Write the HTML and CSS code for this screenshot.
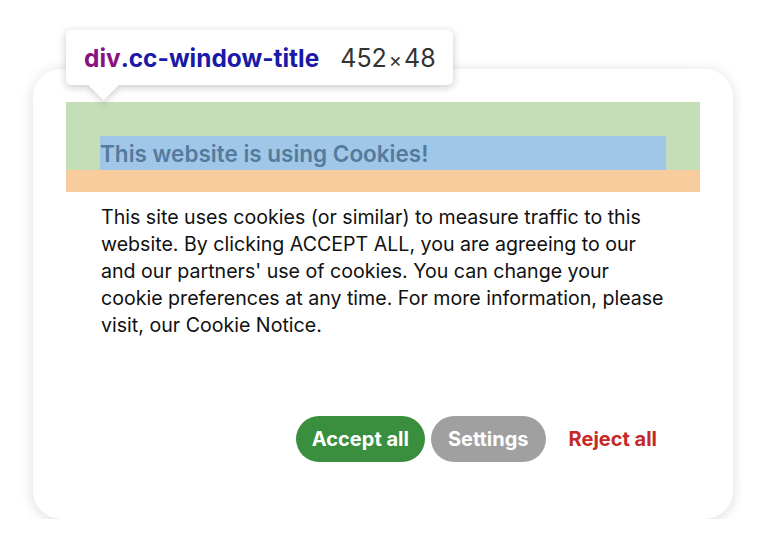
FILE: index.html
```html
<!DOCTYPE html>
<html>
<head>
<meta charset="utf-8">
<link rel="stylesheet" href="styles.css">
</head>
<body>
<div class="stage">
  <div class="cc-window">
    <div class="cc-window-title"><span class="title-text">This website is using Cookies!</span></div>
    <p class="cc-message">This site uses cookies (or similar) to measure traffic to this website. By clicking ACCEPT ALL, you are agreeing to our and our partners' use of cookies. You can change your cookie preferences at any time. For more information, please visit, our Cookie Notice.</p>
    <div class="cc-buttons">
      <button class="cc-btn cc-accept">Accept all</button>
      <button class="cc-btn cc-settings">Settings</button>
      <button class="cc-btn cc-reject">Reject all</button>
    </div>
  </div>
  <div class="inspect-tip">
    <span class="tag">div</span><span class="cls">.cc-window-title</span>
    <span class="dims">452<span class="times">×</span>48</span>
  </div>
</div>
</body>
</html>
```

FILE: styles.css
```css
html, body {
  margin: 0;
  padding: 0;
  background: #ffffff;
  font-family: Inter, "Noto Sans", sans-serif;
}

.stage {
  position: relative;
  padding: 69px 43px 0 33px;
}

.cc-window {
  width: 700px;
  height: 450px;
  box-sizing: border-box;
  padding: 33px;
  background: #fff;
  border-radius: 28px;
  box-shadow: 0 2px 14px rgba(0, 0, 0, 0.14);
  display: flex;
  flex-direction: column;
}

.cc-window-title {
  position: relative;
  height: 34px;
  padding: 34px 34px 0;
  margin-bottom: 22px;
  background: rgba(147, 196, 125, 0.55);
  font-size: 22.5px;
  font-weight: 600;
  line-height: 36px;
  color: #222;
}

.cc-window-title::before {
  content: "";
  position: absolute;
  left: 0;
  right: 0;
  bottom: -22px;
  height: 22px;
  background: rgba(246, 178, 107, 0.66);
}

.cc-window-title::after {
  content: "";
  position: absolute;
  left: 34px;
  right: 34px;
  top: 34px;
  bottom: 0;
  background: rgba(111, 168, 220, 0.66);
}

.title-text {
  display: block;
  height: 34px;
  background: #fff;
}

.cc-message {
  margin: 12px 30px 0 35px;
  font-size: 19.6px;
  line-height: 27px;
  color: #111;
}

.cc-buttons {
  margin-top: 77px;
  display: flex;
  justify-content: flex-end;
  gap: 6px;
  padding-right: 26px;
}

.cc-btn {
  height: 46px;
  padding: 0 17px;
  border: none;
  border-radius: 23px;
  font-family: Inter, "Noto Sans", sans-serif;
  font-size: 20px;
  font-weight: 700;
  color: #fff;
  cursor: pointer;
}

.cc-accept {
  background: #3a8f3f;
  padding: 0 16px;
}

.cc-settings {
  background: #a0a0a0;
}

.cc-reject {
  background: transparent;
  color: #c62828;
}

.inspect-tip {
  position: absolute;
  z-index: 2;
  left: 66px;
  top: 30px;
  width: 387px;
  height: 55px;
  box-sizing: border-box;
  padding: 0 18px;
  display: flex;
  align-items: center;
  background: #fff;
  border-radius: 5px;
  box-shadow: 0 2px 8px rgba(0, 0, 0, 0.22);
  font-size: 24.4px;
  white-space: nowrap;
}

.inspect-tip::before {
  content: "";
  position: absolute;
  z-index: -1;
  left: 26.5px;
  bottom: -10.5px;
  width: 21px;
  height: 21px;
  background: #fff;
  transform: rotate(45deg);
  box-shadow: 3px 3px 6px rgba(0, 0, 0, 0.14);
}

.inspect-tip::after {
  content: "";
  position: absolute;
  left: 10px;
  width: 90px;
  top: 30px;
  bottom: 0;
  background: #fff;
}

.tag {
  position: relative;
  z-index: 1;
  color: #881280;
  font-weight: 700;
}

.cls {
  position: relative;
  z-index: 1;
  color: #1a1aa6;
  font-weight: 700;
}

.dims {
  position: relative;
  z-index: 1;
  margin-left: 21px;
  color: #333;
  font-weight: 400;
  font-size: 25px;
}

.times {
  margin: 0 2px;
  font-size: 20px;
}
```
